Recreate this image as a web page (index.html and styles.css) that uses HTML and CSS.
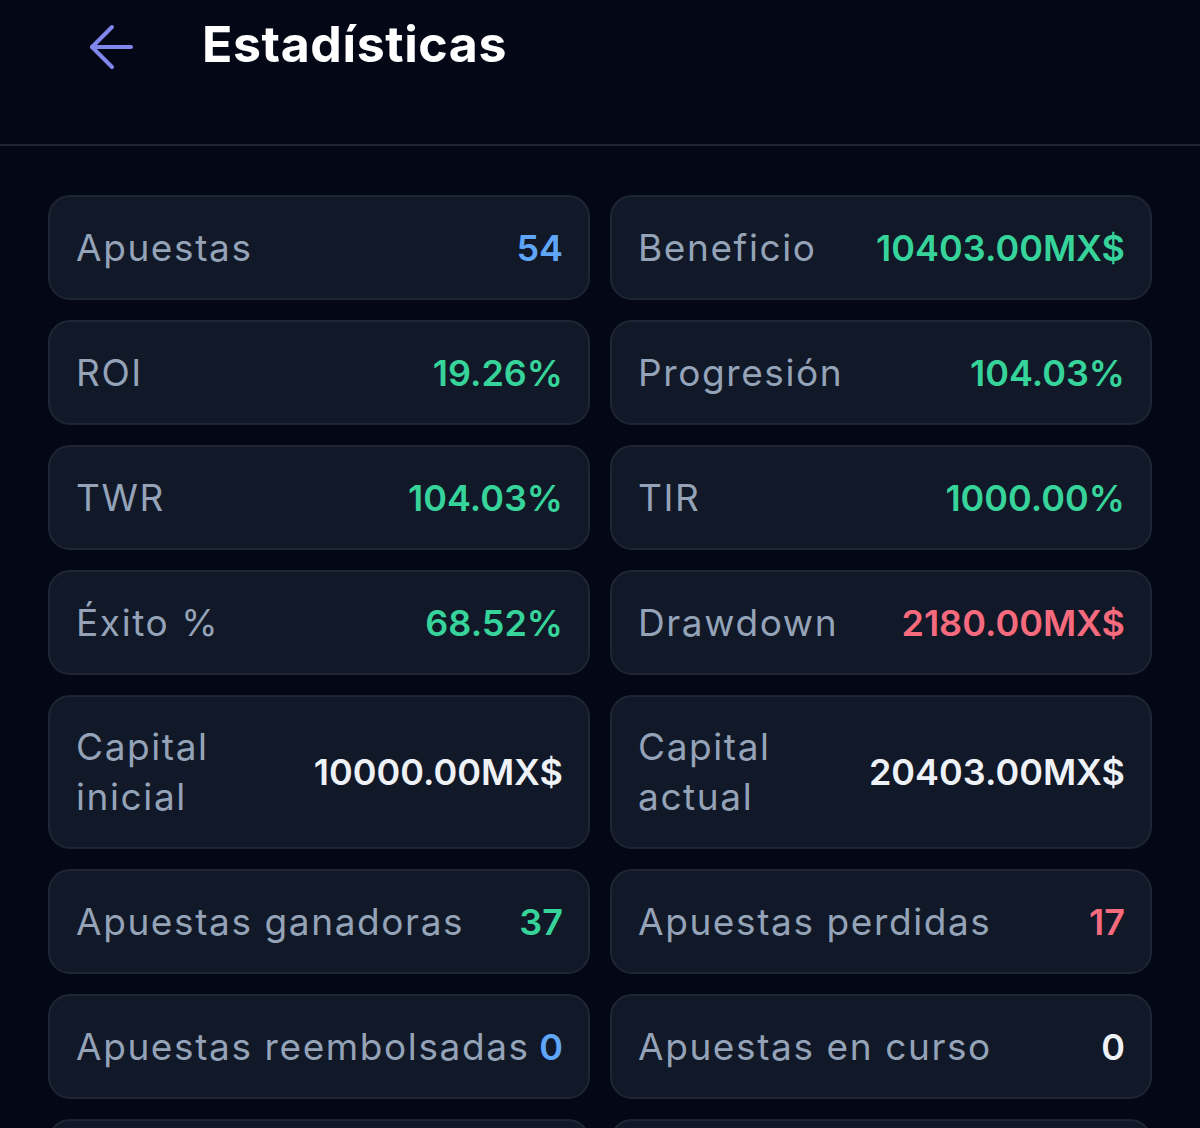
FILE: index.html
```html
<!DOCTYPE html>
<html lang="es">
<head>
    <meta charset="UTF-8">
    <meta name="viewport" content="width=device-width, initial-scale=1.0">
    <title>Estadísticas</title>
    <link rel="stylesheet" href="styles.css">
</head>
<body>

<header class="topbar">
    <button class="back" aria-label="Volver">
        <svg width="46" height="46" viewBox="0 0 46 46" fill="none" stroke="currentColor" stroke-width="4" stroke-linecap="round" stroke-linejoin="round">
            <path d="M3 23H42"/>
            <path d="M23 3L3 23L23 43"/>
        </svg>
    </button>
    <h1>Estadísticas</h1>
</header>

<main class="stats">
    <div class="card"><span class="label">Apuestas</span><span class="value blue">54</span></div>
    <div class="card"><span class="label">Beneficio</span><span class="value green">10403.00MX$</span></div>
    <div class="card"><span class="label">ROI</span><span class="value green">19.26%</span></div>
    <div class="card"><span class="label">Progresión</span><span class="value green">104.03%</span></div>
    <div class="card"><span class="label">TWR</span><span class="value green">104.03%</span></div>
    <div class="card"><span class="label">TIR</span><span class="value green">1000.00%</span></div>
    <div class="card"><span class="label">Éxito %</span><span class="value green">68.52%</span></div>
    <div class="card"><span class="label">Drawdown</span><span class="value red">2180.00MX$</span></div>
    <div class="card"><span class="label">Capital inicial</span><span class="value">10000.00MX$</span></div>
    <div class="card"><span class="label">Capital actual</span><span class="value">20403.00MX$</span></div>
    <div class="card"><span class="label">Apuestas ganadoras</span><span class="value green">37</span></div>
    <div class="card"><span class="label">Apuestas perdidas</span><span class="value red">17</span></div>
    <div class="card"><span class="label">Apuestas reembolsadas</span><span class="value blue">0</span></div>
    <div class="card"><span class="label">Apuestas en curso</span><span class="value">0</span></div>
    <div class="card"></div>
    <div class="card"></div>
</main>

</body>
</html>
```

FILE: styles.css
```css
body {
    margin: 0;
    background: #040816;
    font-family: Inter, "Noto Sans", sans-serif;
    color: #f1f5f9;
    height: 1128px;
    overflow: hidden;
}
.topbar {
    display: flex;
    align-items: flex-start;
    height: 146px;
    padding: 0 0 0 89px;
    box-sizing: border-box;
    border-bottom: 2px solid #1c2333;
}
.back {
    background: none;
    border: none;
    padding: 0;
    margin-top: 24px;
    color: #7f86ec;
    cursor: pointer;
    display: flex;
}
.topbar h1 {
    margin: 14px 0 0 67px;
    font-size: 50px;
    line-height: 60px;
    font-weight: 700;
    letter-spacing: 0.6px;
    color: #ffffff;
}
.stats {
    display: grid;
    grid-template-columns: 1fr 1fr;
    gap: 20px;
    padding: 49px 48px 0;
}
.card {
    display: flex;
    align-items: center;
    justify-content: space-between;
    gap: 6px;
    min-height: 105px;
    box-sizing: border-box;
    padding: 0 25px 0 26px;
    background: #111827;
    border: 2px solid #1e2636;
    border-radius: 22px;
}
.label {
    font-size: 37px;
    line-height: 50px;
    letter-spacing: 1.6px;
    color: #94a3b8;
    padding: 25px 0;
}
.value {
    flex-shrink: 0;
    font-size: 36px;
    font-weight: 600;
    color: #eef1f6;
}
.blue { color: #5fa5f8; }
.green { color: #36d39a; }
.red { color: #f66a7e; }
```
